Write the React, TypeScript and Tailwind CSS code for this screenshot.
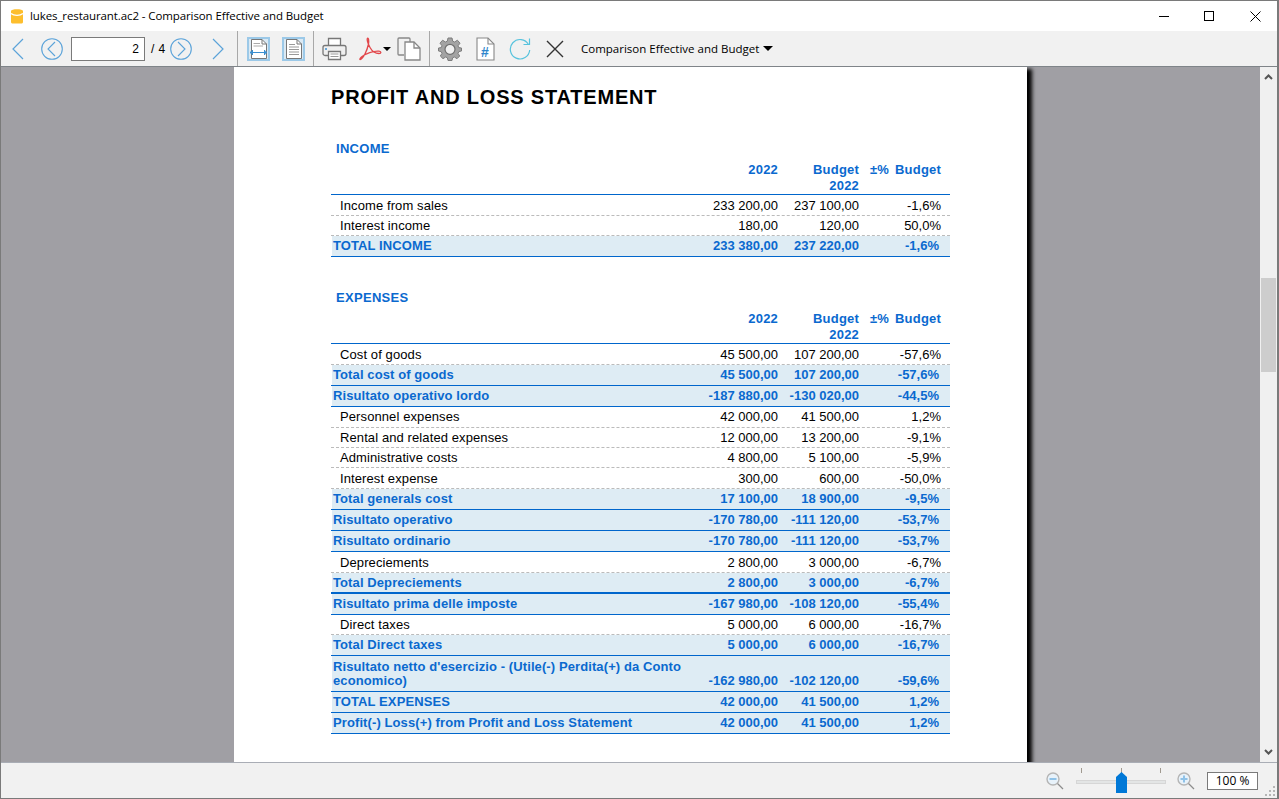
import React from 'react';

type Row = {
  label: string;
  a: string;
  b: string;
  c: string;
  total?: boolean;
  h: string;
  line?: string;
  pad?: string;
};

const income: Row[] = [
  { label: 'Income from sales', a: '233 200,00', b: '237 100,00', c: '-1,6%', h: 'h-[21px]' },
  { label: 'Interest income', a: '180,00', b: '120,00', c: '50,0%', h: 'h-[20px]' },
  { label: 'TOTAL INCOME', a: '233 380,00', b: '237 220,00', c: '-1,6%', total: true, h: 'h-[21px]' },
];

const expenses: Row[] = [
  { label: 'Cost of goods', a: '45 500,00', b: '107 200,00', c: '-57,6%', h: 'h-[21px]' },
  { label: 'Total cost of goods', a: '45 500,00', b: '107 200,00', c: '-57,6%', total: true, h: 'h-[21px]' },
  { label: 'Risultato operativo lordo', a: '-187 880,00', b: '-130 020,00', c: '-44,5%', total: true, h: 'h-[21px]' },
  { label: 'Personnel expenses', a: '42 000,00', b: '41 500,00', c: '1,2%', h: 'h-[21px]', pad: 'pb-[3px]' },
  { label: 'Rental and related expenses', a: '12 000,00', b: '13 200,00', c: '-9,1%', h: 'h-[20px]' },
  { label: 'Administrative costs', a: '4 800,00', b: '5 100,00', c: '-5,9%', h: 'h-[20px]' },
  { label: 'Interest expense', a: '300,00', b: '600,00', c: '-50,0%', h: 'h-[21px]' },
  { label: 'Total generals cost', a: '17 100,00', b: '18 900,00', c: '-9,5%', total: true, h: 'h-[21px]' },
  { label: 'Risultato operativo', a: '-170 780,00', b: '-111 120,00', c: '-53,7%', total: true, h: 'h-[21px]' },
  { label: 'Risultato ordinario', a: '-170 780,00', b: '-111 120,00', c: '-53,7%', total: true, h: 'h-[21px]' },
  { label: 'Depreciements', a: '2 800,00', b: '3 000,00', c: '-6,7%', h: 'h-[21px]' },
  { label: 'Total Depreciements', a: '2 800,00', b: '3 000,00', c: '-6,7%', total: true, h: 'h-[21px]', line: 'border-b-2', pad: 'pb-[2px]' },
  { label: 'Risultato prima delle imposte', a: '-167 980,00', b: '-108 120,00', c: '-55,4%', total: true, h: 'h-[21px]' },
  { label: 'Direct taxes', a: '5 000,00', b: '6 000,00', c: '-16,7%', h: 'h-[20px]' },
  { label: 'Total Direct taxes', a: '5 000,00', b: '6 000,00', c: '-16,7%', total: true, h: 'h-[21px]' },
  {
    label: "Risultato netto d'esercizio - (Utile(-) Perdita(+) da Conto economico)",
    a: '-162 980,00',
    b: '-102 120,00',
    c: '-59,6%',
    total: true,
    h: 'h-[36px]',
  },
  { label: 'TOTAL EXPENSES', a: '42 000,00', b: '41 500,00', c: '1,2%', total: true, h: 'h-[21px]' },
  { label: 'Profit(-) Loss(+) from Profit and Loss Statement', a: '42 000,00', b: '41 500,00', c: '1,2%', total: true, h: 'h-[21px]' },
];

function TableRow({ row }: { row: Row }) {
  if (row.total) {
    return (
      <div className={`${row.h} ${row.line ?? 'border-b'} border-[#0066cc]`}>
        <div className={`flex items-end h-full ml-px bg-[#deecf4] ${row.pad ?? 'pb-[3px]'} font-bold text-[#0a69cf]`}>
          <div className="w-[366px] pl-px leading-[14px] tracking-[0.1px]">{row.label}</div>
          <div className="w-[80px] text-right leading-[14px]">{row.a}</div>
          <div className="w-[81px] text-right leading-[14px]">{row.b}</div>
          <div className="w-[80px] text-right leading-[14px]">{row.c}</div>
        </div>
      </div>
    );
  }
  return (
    <div className={`flex items-end ${row.h} border-b border-dashed border-[#bbbbbb] ${row.pad ?? 'pb-[2px]'} text-black`}>
      <div className="w-[367px] pl-[9px] leading-[14px] tracking-[0.1px]">{row.label}</div>
      <div className="w-[80px] text-right leading-[14px]">{row.a}</div>
      <div className="w-[81px] text-right leading-[14px]">{row.b}</div>
      <div className="w-[82px] text-right leading-[14px]">{row.c}</div>
    </div>
  );
}

function Section({ title, rows, top }: { title: string; rows: Row[]; top: string }) {
  return (
    <div className={top}>
      <div className="pl-[5px] h-[20px] leading-[16px] font-bold text-[#0a69cf] tracking-[0.3px]">{title}</div>
      <div className="flex h-[32px] pt-px border-b border-[#0066cc] box-content font-bold text-[#0a69cf] tracking-[0.2px]">
        <div className="w-[447px] text-right leading-[16px]">2022</div>
        <div className="w-[81px] text-right leading-[16px]">
          Budget
          <br />
          2022
        </div>
        <div className="w-[82px] flex justify-end gap-[6px] leading-[16px] whitespace-nowrap">
          <span>±%</span>
          <span>Budget</span>
        </div>
      </div>
      {rows.map((r) => (
        <TableRow key={r.label} row={r} />
      ))}
    </div>
  );
}

function Sep() {
  return <div className="w-px h-[35px] bg-[#a8a8a8] shrink-0" />;
}

function Chevron({ dir }: { dir: 'left' | 'right' }) {
  return (
    <svg width="14" height="22" viewBox="0 0 14 22" fill="none" stroke="#5ba3d9" strokeWidth="1.2">
      <path d={dir === 'left' ? 'M12 1 L2 11 L12 21' : 'M2 1 L12 11 L2 21'} />
    </svg>
  );
}

function CircleChevron({ dir }: { dir: 'left' | 'right' }) {
  return (
    <svg width="22" height="22" viewBox="0 0 22 22" fill="none" stroke="#5ba3d9" strokeWidth="1.1">
      <circle cx="11" cy="11" r="10.3" />
      <path d={dir === 'left' ? 'M14 4 L7 11 L14 18' : 'M8 4 L15 11 L8 18'} />
    </svg>
  );
}

function FitBox({ wide }: { wide?: boolean }) {
  return (
    <div className="w-[23px] h-[24px] border-2 border-[#9cc9e8] bg-[#dbe9f3] flex items-center justify-center">
      <svg width="19" height="20" viewBox="0 0 19 20" fill="none">
        <path d="M2.500 .5H13L17.500 5V19.500H2.500Z" fill="#fff" stroke="#777" />
        <path d="M13 .5V5H17.500" stroke="#777" />
        {wide ? (
          <>
            <path d="M4.500 4.500H11M4.500 7H14" stroke="#aaa" />
            <path d="M1 13.500H18" stroke="#3b8fd0" />
            <path d="M3.500 11V16M15.500 11V16M1 13.500L3.500 11.500M1 13.500L3.500 15.500M18 13.500L15.500 11.500M18 13.500L15.500 15.500" stroke="#3b8fd0" />
          </>
        ) : (
          <path d="M5 5.500H11M5 8H15M5 10.500H15M5 13H15M5 15.500H15" stroke="#999" />
        )}
      </svg>
    </div>
  );
}

function Printer() {
  return (
    <svg width="25" height="24" viewBox="0 0 25 24" fill="none">
      <path d="M6.500 9V1.500H18.500V9" fill="#fff" stroke="#777" strokeWidth="1.3" />
      <rect x="1" y="8.500" width="23" height="10" rx="2" fill="#f0f0f0" stroke="#777" strokeWidth="1.3" />
      <path d="M6.500 14.500H18.500V22.500H6.500Z" fill="#fff" stroke="#777" strokeWidth="1.3" />
      <path d="M8.500 17H16.500M8.500 19.500H16.500" stroke="#999" />
      <circle cx="4" cy="12" r="1" fill="#3b8fd0" />
    </svg>
  );
}

function Pdf() {
  return (
    <svg width="23" height="24" viewBox="0 0 23 24" fill="none" stroke="#e2474b" strokeWidth="1.3">
      <path d="M1 22.500C4 22 8 14 9.500 7C10 3.500 9.500 1 8.700 1.200C7.500 1.500 8.500 6 11 10.500C13.500 15 16 16.500 20 16.500C22.500 16.500 22.500 14.500 20 14.200C15 13.700 6 16.500 2.500 20C1 21.500 .5 22.500 1 22.500Z" />
    </svg>
  );
}

function CopyDoc() {
  return (
    <svg width="24" height="24" viewBox="0 0 24 24" fill="none" stroke="#888" strokeWidth="1.3">
      <path d="M7 18H2C1.400 18 1 17.600 1 17V2C1 1.400 1.400 1 2 1H12C12.600 1 13 1.400 13 2V5" />
      <path d="M8 5H17L23 11V23H8Z" fill="#fff" />
      <path d="M17 5V11H23" />
    </svg>
  );
}

function Gear() {
  return (
    <svg width="24" height="24" viewBox="0 0 24 24" fill="none">
      <path
        d="M10 1H14L14.700 4.200L16.600 5L19.400 3.200L22 6.200L20 8.800L20.800 10.600L23.500 11V14L20.800 14.600L20 16.400L21.700 19L19 21.700L16.400 20L14.600 20.800L14 23.500H10L9.400 20.800L7.600 20L5 21.700L2.300 19L4 16.400L3.200 14.600L.5 14V11L3.200 10.600L4 8.800L2 6.200L4.600 3.200L7.400 5L9.300 4.200Z"
        fill="#a3a3a3"
        stroke="#7d7d7d"
      />
      <circle cx="12" cy="12.300" r="5" fill="#f0f0f0" stroke="#6f6f6f" strokeWidth="1.2" />
    </svg>
  );
}

function HashDoc() {
  return (
    <div className="relative w-[19px] h-[24px]">
      <svg width="19" height="24" viewBox="0 0 19 24" fill="none" stroke="#888" strokeWidth="1.1">
        <path d="M1 1H12L18 7V23H1Z" fill="#fff" />
        <path d="M12 1V7H18" />
      </svg>
      <span className="absolute left-[5px] top-[7px] text-[14px] leading-[16px] font-bold text-[#2f86cc] font-['Liberation_Sans',sans-serif]">#</span>
    </div>
  );
}

function Refresh() {
  return (
    <svg width="22" height="22" viewBox="0 0 22 22" fill="none" stroke="#58c3dd" strokeWidth="1.2">
      <path d="M19.500 6.500A9.700 9.700 0 1 0 20.700 12" />
      <path d="M20.500 .5V6.500H14.500" />
    </svg>
  );
}

function Magnifier({ plus }: { plus?: boolean }) {
  return (
    <svg width="18" height="18" viewBox="0 0 18 18" fill="none">
      <circle cx="7" cy="7" r="6" fill="#e8f2fa" stroke="#b5b5b5" strokeWidth="1.4" />
      <path d="M3.500 7H10.500" stroke="#8fc2e8" strokeWidth="2" />
      {plus && <path d="M7 3.500V10.500" stroke="#8fc2e8" strokeWidth="2" />}
      <path d="M11.500 11.500L17 17" stroke="#8d8d8d" strokeWidth="1.2" />
    </svg>
  );
}

export default function App() {
  return (
    <div className="w-[1279px] h-[799px] flex flex-col overflow-hidden bg-white border border-[#7a7a7a] border-r-2 font-['Liberation_Sans',Arial,sans-serif] text-[13px]">
      {/* barre de titre */}
      <div className="h-[30px] flex items-center shrink-0 pl-[9px] font-['Open_Sans',sans-serif] text-[11.5px] tracking-[-0.1px] text-black">
        <svg width="14" height="16" viewBox="0 0 14 16">
          <path d="M1 3C1 .5 13 .5 13 3V14C13 15 12 15.500 11 15.500H3C2 15.500 1 15 1 14Z" fill="#fdbe2d" />
          <path d="M1 5.500C4 8 10 8 13 5.500" stroke="#fff" strokeWidth="1.400" fill="none" />
        </svg>
        <span className="ml-[6px]">lukes_restaurant.ac2 - Comparison Effective and Budget</span>
        <div className="ml-auto flex items-center">
          <svg width="10" height="10" viewBox="0 0 10 10" className="mr-[35px]" stroke="#000">
            <path d="M0 5.500H10" />
          </svg>
          <svg width="11" height="11" viewBox="0 0 11 11" className="mr-[35px]" fill="none" stroke="#000">
            <rect x=".5" y=".5" width="9" height="9" />
          </svg>
          <svg width="11" height="11" viewBox="0 0 11 11" className="mr-[16px]" stroke="#000">
            <path d="M.5 .5L10.500 10.500M10.500 .5L.5 10.500" />
          </svg>
        </div>
      </div>

      {/* barre d'outils */}
      <div className="h-[35px] shrink-0 flex items-center bg-[#f1f1f1] text-[12px] text-black">
        <div className="ml-[10px]"><Chevron dir="left" /></div>
        <div className="ml-[16px]"><CircleChevron dir="left" /></div>
        <div className="ml-[8px] w-[74px] h-[24px] bg-white border border-[#7a7a7a] text-right pr-[5px] leading-[22px]">2</div>
        <div className="ml-[6px] w-[19px] leading-[16px] tracking-[0.4px]">/ 4</div>
        <div><CircleChevron dir="right" /></div>
        <div className="ml-[19px]"><Chevron dir="right" /></div>
        <div className="ml-[12px]"><Sep /></div>
        <div className="ml-[9px]"><FitBox wide /></div>
        <div className="ml-[12px]"><FitBox /></div>
        <div className="ml-[8px]"><Sep /></div>
        <div className="ml-[8px]"><Printer /></div>
        <div className="ml-[12px]"><Pdf /></div>
        <div className="ml-px w-0 h-0 border-x-[4px] border-x-transparent border-t-[4px] border-t-black" />
        <div className="ml-[6px]"><CopyDoc /></div>
        <div className="ml-[8px]"><Sep /></div>
        <div className="ml-[8px]"><Gear /></div>
        <div className="ml-[14px]"><HashDoc /></div>
        <div className="ml-[14px]"><Refresh /></div>
        <svg width="18" height="18" viewBox="0 0 18 18" className="ml-[15px]" stroke="#333" strokeWidth="1.4">
          <path d="M1 1L17 17M17 1L1 17" />
        </svg>
        <span className="ml-[17px] font-['Open_Sans',sans-serif] text-[11.5px]">Comparison Effective and Budget</span>
        <div className="ml-[4px] w-0 h-0 border-x-[5px] border-x-transparent border-t-[5px] border-t-black" />
      </div>

      {/* zone du document */}
      <div className="h-[697px] shrink-0 flex border-t border-b border-t-[#7f8489] border-b-[#a9adb5] bg-[#a09fa4] overflow-hidden">
        <div className="w-[233px] shrink-0" />
        <div className="w-[793px] h-[800px] shrink-0 bg-white pl-[97px] pr-[77px] shadow-[7px_0_4px_-2px_#000]">
          <div className="pt-[17px] h-[61px] text-[20px] leading-[26px] font-bold text-black tracking-[0.8px]">PROFIT AND LOSS STATEMENT</div>
          <Section title="INCOME" rows={income} top="mt-[13px]" />
          <Section title="EXPENSES" rows={expenses} top="mt-[33px]" />
        </div>
        <div className="flex-1" />
        {/* barre de défilement */}
        <div className="w-[17px] shrink-0 bg-[#f0f0f0] flex flex-col items-center">
          <svg width="9" height="6" viewBox="0 0 9 6" fill="none" stroke="#555" strokeWidth="2" className="mt-[7px]">
            <path d="M1 5L4.500 1.500L8 5" />
          </svg>
          <div className="mt-[198px] w-[15px] h-[94px] bg-[#cdcdcd]" />
          <svg width="9" height="6" viewBox="0 0 9 6" fill="none" stroke="#555" strokeWidth="2" className="mt-auto mb-[7px]">
            <path d="M1 1L4.500 4.500L8 1" />
          </svg>
        </div>
      </div>

      {/* barre d'état */}
      <div className="flex-1 bg-[#f1f1f1] flex items-center relative">
        <div className="ml-[1045px]"><Magnifier /></div>
        <div className="relative ml-[12px] w-[90px] h-[26px]">
          <div className="absolute left-[5px] top-0 w-px h-[5px] bg-[#a09a90]" />
          <div className="absolute left-[45px] top-0 w-px h-[5px] bg-[#a09a90]" />
          <div className="absolute left-[84px] top-0 w-px h-[5px] bg-[#a09a90]" />
          <div className="absolute left-0 top-[12px] w-[90px] h-[4px] bg-[#e3e5e5] border border-[#d6d6d6]" />
          <svg width="11" height="21" viewBox="0 0 11 21" className="absolute left-[40px] top-[4px]">
            <path d="M5.500 0L11 5V21H0V5Z" fill="#0078d7" />
          </svg>
        </div>
        <div className="ml-[11px]"><Magnifier plus /></div>
        <div className="ml-[12px] w-[51px] h-[18px] bg-white border border-[#7a7a7a] text-center leading-[16px] font-['Open_Sans',sans-serif] text-[12px] text-black">100 %</div>
        <svg width="11" height="11" viewBox="0 0 11 11" className="absolute right-[1px] bottom-[1px]" fill="#b5b5b5">
          <rect x="8" y="0" width="2" height="2" />
          <rect x="4" y="4" width="2" height="2" />
          <rect x="8" y="4" width="2" height="2" />
          <rect x="0" y="8" width="2" height="2" />
          <rect x="4" y="8" width="2" height="2" />
          <rect x="8" y="8" width="2" height="2" />
        </svg>
      </div>
    </div>
  );
}
